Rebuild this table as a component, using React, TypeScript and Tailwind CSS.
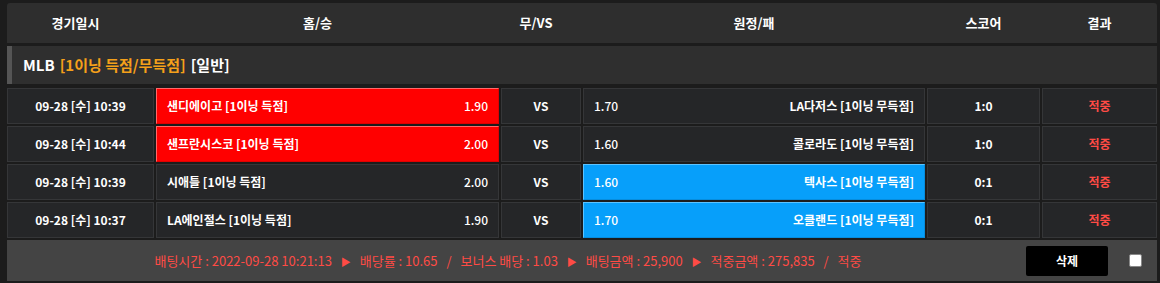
import React from "react";

type Row = {
  date: string;
  home: string;
  homeOdds: string;
  away: string;
  awayOdds: string;
  score: string;
  pick: "home" | "away";
};

const rows: Row[] = [
  { date: "09-28 [수] 10:39", home: "샌디에이고 [1이닝 득점]", homeOdds: "1.90", away: "LA다저스 [1이닝 무득점]", awayOdds: "1.70", score: "1:0", pick: "home" },
  { date: "09-28 [수] 10:44", home: "샌프란시스코 [1이닝 득점]", homeOdds: "2.00", away: "콜로라도 [1이닝 무득점]", awayOdds: "1.60", score: "1:0", pick: "home" },
  { date: "09-28 [수] 10:39", home: "시애틀 [1이닝 득점]", homeOdds: "2.00", away: "텍사스 [1이닝 무득점]", awayOdds: "1.60", score: "0:1", pick: "away" },
  { date: "09-28 [수] 10:37", home: "LA에인절스 [1이닝 득점]", homeOdds: "1.90", away: "오클랜드 [1이닝 무득점]", awayOdds: "1.70", score: "0:1", pick: "away" },
];

const font = "font-['Noto_Sans_CJK_KR','Noto_Sans',sans-serif]";
const cols = "grid grid-cols-[147px_343px_80px_342px_113px_1fr] gap-x-[2px]";
const cell = "bg-[#252628] border border-[#353638] flex items-center h-full";
const redCell = "bg-[#ff0000] border-t border-l border-[#ff6a6a] border-r border-b border-r-[#e00000] border-b-[#e00000]";
const blueCell = "bg-[#079ffa] border-t border-l border-[#5cc3ff] border-r border-b border-r-[#078ddd] border-b-[#078ddd]";

export default function App() {
  return (
    <div className={`w-[1160px] h-[283px] bg-[#1c1c1c] pl-[7px] pr-[3px] pt-[3px] ${font} text-[12px] font-bold text-white`}>
      {/* header */}
      <div className={`${cols} h-[40px] bg-[#2e2e2e] rounded-t-[3px] text-[13px] items-center`}>
        <div className="text-center pr-[10px]">경기일시</div>
        <div className="text-center pr-[20px]">홈/승</div>
        <div className="text-center pr-[10px]">무/VS</div>
        <div className="text-center">원정/패</div>
        <div className="text-center">스코어</div>
        <div className="text-center">결과</div>
      </div>
      {/* league */}
      <div className="mt-[3px] h-[38px] bg-[#2f2f2f] border-l-[5px] border-[#555555] flex items-center pl-[11px] text-[15px]">
        <span>MLB</span>
        <span className="ml-[5px] text-[#f5a01a]">[1이닝 득점/무득점]</span>
        <span className="ml-[5px]">[일반]</span>
      </div>
      {/* rows */}
      <div className="mt-[4px] flex flex-col gap-y-[2px]">
        {rows.map((r, i) => (
          <div key={i} className={`${cols} h-[36px]`}>
            <div className={`${cell} justify-center`}>{r.date}</div>
            <div className={`flex items-center justify-between h-full px-[10px] ${r.pick === "home" ? redCell : "bg-[#252628] border border-[#353638]"}`}>
              <span>{r.home}</span>
              <span className="font-medium">{r.homeOdds}</span>
            </div>
            <div className={`${cell} justify-center`}>VS</div>
            <div className={`flex items-center justify-between h-full px-[10px] ${r.pick === "away" ? blueCell : "bg-[#252628] border border-[#353638]"}`}>
              <span className="font-medium">{r.awayOdds}</span>
              <span>{r.away}</span>
            </div>
            <div className={`${cell} justify-center`}>{r.score}</div>
            <div className={`${cell} justify-center text-[#ff4b45]`}>적중</div>
          </div>
        ))}
      </div>
      {/* footer */}
      <div className="mt-[2px] h-[41px] bg-[#444444] flex items-center">
        <div className="flex-1 mr-[17px] text-center text-[#ff4b45] font-normal text-[13px] whitespace-nowrap">
          배팅시간 : 2022-09-28 10:21:13 <span className="mx-[6px] text-[10px]">▶</span> 배당률 : 10.65 <span className="mx-[6px]">/</span> 보너스 배당 : 1.03 <span className="mx-[6px] text-[10px]">▶</span> 배팅금액 : 25,900 <span className="mx-[6px] text-[10px]">▶</span> 적중금액 : 275,835 <span className="mx-[6px]">/</span> 적중
        </div>
        <div className="w-[82px] h-[30px] bg-black rounded-[2px] flex items-center justify-center text-[12px] font-bold">삭제</div>
        <div className="ml-[21px] mr-[15px] w-[13px] h-[13px] bg-white border border-[#888] rounded-[2px]" />
      </div>
    </div>
  );
}
